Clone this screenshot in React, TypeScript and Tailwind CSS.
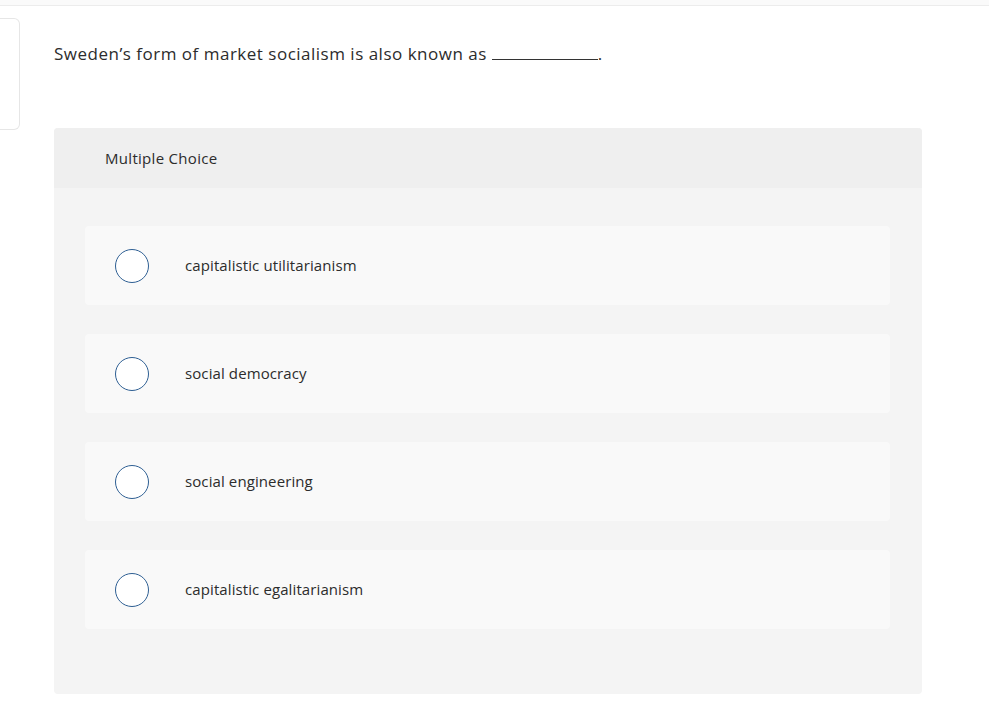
const options = [
  'capitalistic utilitarianism',
  'social democracy',
  'social engineering',
  'capitalistic egalitarianism',
]

export default function App() {
  return (
    <div className="min-h-screen w-[989px] bg-white font-['Open_Sans',sans-serif] text-[#2c2c2c]">
      <div className="h-[6px] border-b border-[#ececec] bg-[#fafafa]" />

      <div className="flex">
        {/* left nav card, mostly cut off */}
        <div className="mt-3 h-[112px] w-[20px] shrink-0 rounded-r-md border border-l-0 border-[#e6e6e6]" />

        <div className="ml-[34px] flex w-[868px] flex-col">
          <p className="mt-[36px] text-[17px] leading-[24px] tracking-[0.5px]">
            Sweden’s form of market socialism is also known as{' '}
            <span className="inline-block w-[106px] border-b border-[#333] align-baseline" />.
          </p>

          <div className="mt-[62px] overflow-hidden rounded bg-[#f4f4f4]">
            <div className="flex h-[60px] items-center bg-[#efefef] pl-[51px] text-[15px] tracking-[0.3px]">
              Multiple Choice
            </div>

            <div className="flex flex-col gap-[29px] pb-[65px] pl-[31px] pr-[32px] pt-[38px]">
              {options.map((opt) => (
                <div
                  key={opt}
                  className="flex h-[79px] items-center rounded bg-[#f9f9f9] pl-[30px]"
                >
                  <span className="h-[34px] w-[34px] shrink-0 rounded-full border-[1.5px] border-[#2e5f93] bg-white" />
                  <span className="ml-[36px] text-[15px] tracking-[0.1px]">{opt}</span>
                </div>
              ))}
            </div>
          </div>
        </div>
      </div>
    </div>
  )
}
